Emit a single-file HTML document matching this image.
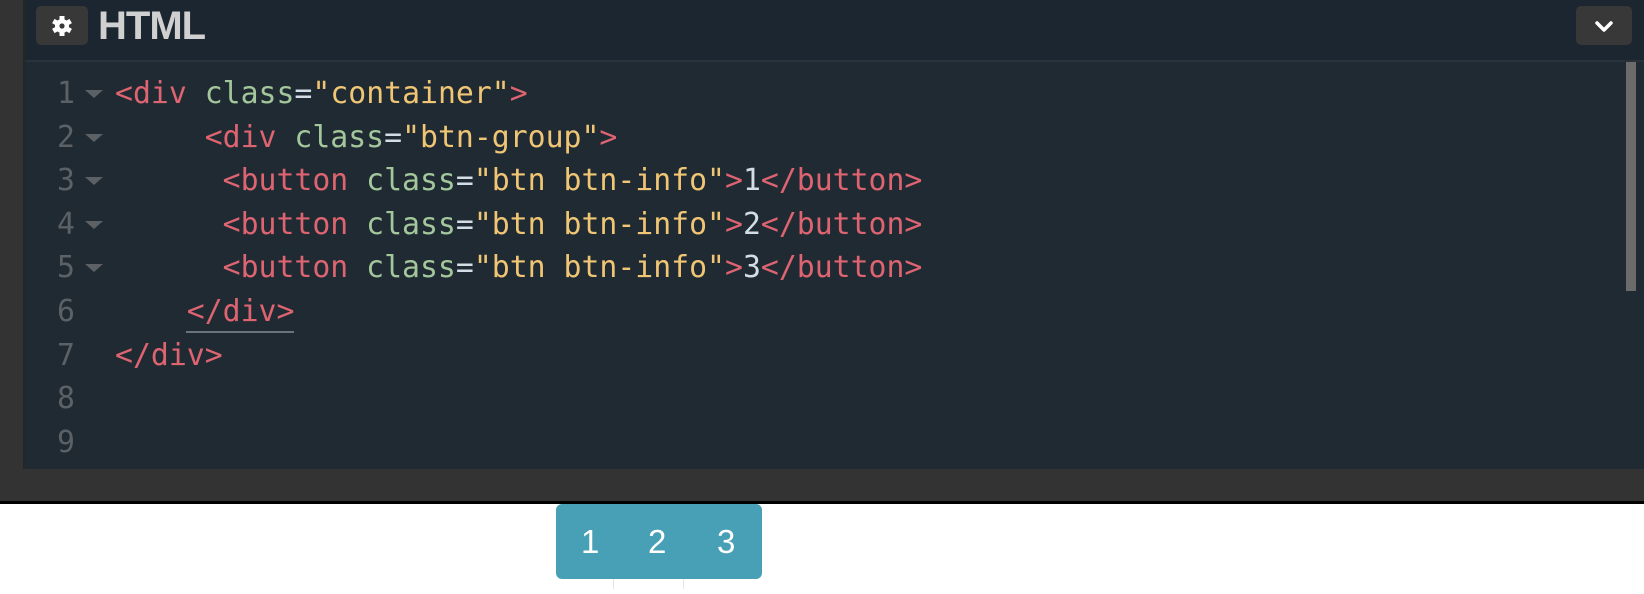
<!DOCTYPE html>
<html><head><meta charset="utf-8"><style>
*{margin:0;padding:0;box-sizing:border-box}
body{width:1644px;height:594px;overflow:hidden;background:#fff;position:relative;font-family:"Liberation Sans",sans-serif}
.left{position:absolute;left:0;top:0;width:25px;height:469px;background:#333;border-right:2px solid #262626}
.head{position:absolute;left:25px;top:0;width:1619px;height:60px;background:#1c2630}
.hl{position:absolute;left:25px;top:60px;width:1619px;height:2px;background:#27323b}
.gear{position:absolute;left:36px;top:6px;width:52px;height:39px;background:#383838;border-radius:5px}
.title{position:absolute;left:98px;top:4px;font-size:40px;font-weight:bold;color:#d0d0d0;letter-spacing:-1px}
.chev{position:absolute;left:1576px;top:6px;width:56px;height:39px;background:#383838;border-radius:5px}
.ed{position:absolute;left:25px;top:62px;width:1619px;height:407px;background:#1f2a33}
.sb{position:absolute;left:1626px;top:62px;width:10px;height:229px;background:#6b6b6b}
.code{position:absolute;left:0;top:72px;font-family:"DejaVu Sans Mono","Liberation Mono",monospace;font-size:29.8px;line-height:43.6px}
.ln{position:absolute;left:57px;color:#5c6166}
.ln div,.tx div{height:43.6px;white-space:pre}
.tx{position:absolute;left:115px}
.t{color:#dd6470}.a{color:#a3c79b}.s{color:#f0c674}.p{color:#d3dde6}
.arr{position:absolute;left:85px;width:0;height:0;border-left:9px solid transparent;border-right:9px solid transparent;border-top:8px solid #5c6166}
.bar{position:absolute;left:0;top:469px;width:1644px;height:35px;background:#333;border-bottom:3px solid #000}
.btns{position:absolute;left:556px;top:504px;width:206px;height:75px;background:#48a0b6;border-radius:6px;color:#fff;font-size:33px}
.btns span{position:absolute;top:19px}
</style></head><body>
<div class="left"></div>
<div class="head"></div>
<div class="hl"></div>
<div class="gear"><svg width="52" height="39" viewBox="0 0 52 39"><g fill="#fff" transform="translate(26,20)"><circle r="7"/><g><rect x="-2.5" y="-10" width="5" height="20"/><rect x="-2.5" y="-10" width="5" height="20" transform="rotate(60)"/><rect x="-2.5" y="-10" width="5" height="20" transform="rotate(120)"/></g><circle r="2.6" fill="#383838"/></g></svg></div>
<div class="title">HTML</div>
<div class="chev"><svg width="56" height="39" viewBox="0 0 56 39"><path d="M21 17 L28 24 L35 17" stroke="#fff" stroke-width="3.5" fill="none" stroke-linecap="round" stroke-linejoin="round"/></svg></div>
<div class="ed"></div>
<div class="sb"></div>
<div class="code"><div class="ln"><div>1</div><div>2</div><div>3</div><div>4</div><div>5</div><div>6</div><div>7</div><div>8</div><div>9</div></div><div class="tx"><div><span class="t">&lt;div</span> <span class="a">class</span><span class="p">=</span><span class="s">"container"</span><span class="t">&gt;</span></div><div>     <span class="t">&lt;div</span> <span class="a">class</span><span class="p">=</span><span class="s">"btn-group"</span><span class="t">&gt;</span></div><div>      <span class="t">&lt;button</span> <span class="a">class</span><span class="p">=</span><span class="s">"btn btn-info"</span><span class="t">&gt;</span><span class="p">1</span><span class="t">&lt;/button&gt;</span></div><div>      <span class="t">&lt;button</span> <span class="a">class</span><span class="p">=</span><span class="s">"btn btn-info"</span><span class="t">&gt;</span><span class="p">2</span><span class="t">&lt;/button&gt;</span></div><div>      <span class="t">&lt;button</span> <span class="a">class</span><span class="p">=</span><span class="s">"btn btn-info"</span><span class="t">&gt;</span><span class="p">3</span><span class="t">&lt;/button&gt;</span></div><div>    <span class="t">&lt;/div&gt;</span></div><div><span class="t">&lt;/div&gt;</span></div><div></div><div></div></div></div>
<div class="arr" style="top:90px"></div>
<div class="arr" style="top:134px"></div>
<div class="arr" style="top:177px"></div>
<div class="arr" style="top:221px"></div>
<div class="arr" style="top:264px"></div>
<div style="position:absolute;left:186px;top:331px;width:108px;height:2px;background:#6b737a"></div>
<div class="bar"></div>
<div class="btns"><span style="left:25px">1</span><span style="left:92px">2</span><span style="left:161px">3</span></div>
<div style="position:absolute;left:613px;top:579px;width:1px;height:10px;background:#e6e6e6"></div>
<div style="position:absolute;left:683px;top:579px;width:1px;height:10px;background:#e6e6e6"></div>
</body></html>
